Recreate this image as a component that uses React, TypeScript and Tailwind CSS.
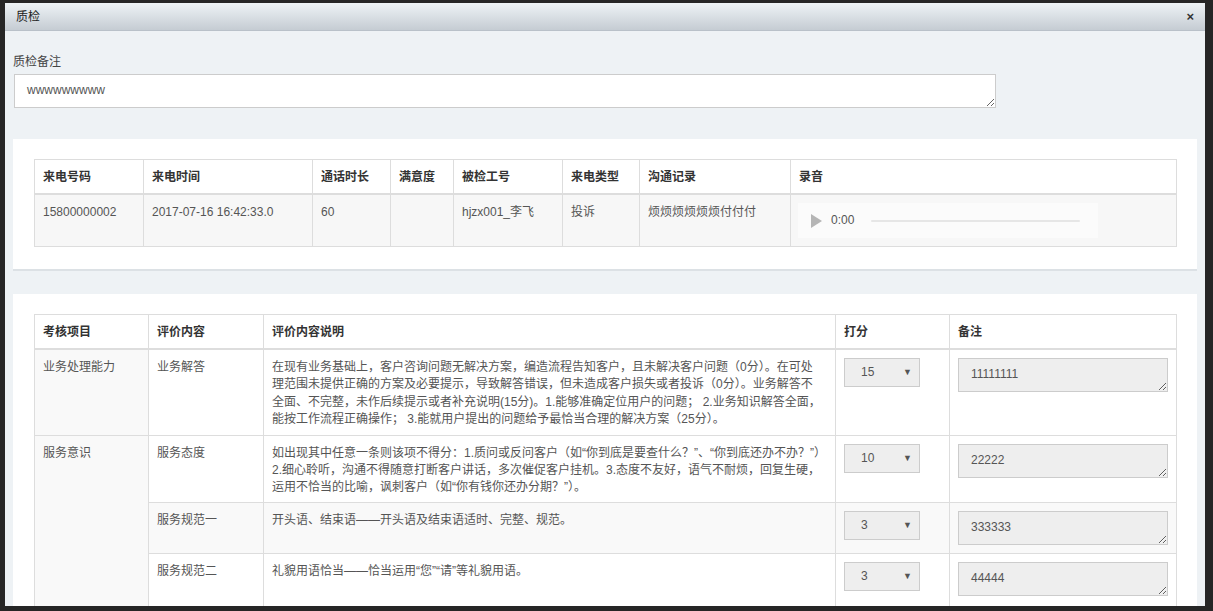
import React from "react";

const FONT = {
  fontFamily: '"Liberation Sans", Arial, "Noto Sans CJK SC", sans-serif',
};

const CALL_COLS = [
  { label: "来电号码", w: "w-[109px]" },
  { label: "来电时间", w: "w-[169px]" },
  { label: "通话时长", w: "w-[78px]" },
  { label: "满意度", w: "w-[63px]" },
  { label: "被检工号", w: "w-[109px]" },
  { label: "来电类型", w: "w-[77px]" },
  { label: "沟通记录", w: "w-[151px]" },
  { label: "录音", w: "w-[386px]" },
];

const CALL_ROW = [
  "15800000002",
  "2017-07-16 16:42:33.0",
  "60",
  "",
  "hjzx001_李飞",
  "投诉",
  "烦烦烦烦烦烦付付付",
];

const EVAL_COLS = [
  { label: "考核项目", w: "w-[114px]" },
  { label: "评价内容", w: "w-[115px]" },
  { label: "评价内容说明", w: "w-[572px]" },
  { label: "打分", w: "w-[114px]" },
  { label: "备注", w: "w-[227px]" },
];

type EvalRow = {
  group?: { name: string; span: number };
  item: string;
  lines: string[];
  score: string;
  remark: string;
  striped?: boolean;
  tall?: boolean;
};

const EVAL_ROWS: EvalRow[] = [
  {
    group: { name: "业务处理能力", span: 1 },
    item: "业务解答",
    lines: [
      "在现有业务基础上，客户咨询问题无解决方案，编造流程告知客户，且未解决客户问题（0分）。在可处",
      "理范围未提供正确的方案及必要提示，导致解答错误，但未造成客户损失或者投诉（0分）。业务解答不",
      "全面、不完整，未作后续提示或者补充说明(15分)。1.能够准确定位用户的问题； 2.业务知识解答全面，",
      "能按工作流程正确操作； 3.能就用户提出的问题给予最恰当合理的解决方案（25分）。",
    ],
    score: "15",
    remark: "11111111",
    tall: true,
  },
  {
    group: { name: "服务意识", span: 3 },
    item: "服务态度",
    lines: [
      "如出现其中任意一条则该项不得分：1.质问或反问客户（如“你到底是要查什么？”、“你到底还办不办？”）",
      "2.细心聆听，沟通不得随意打断客户讲话，多次催促客户挂机。3.态度不友好，语气不耐烦，回复生硬，",
      "运用不恰当的比喻，讽刺客户（如“你有钱你还办分期？”）。",
    ],
    score: "10",
    remark: "22222",
  },
  {
    item: "服务规范一",
    lines: ["开头语、结束语——开头语及结束语适时、完整、规范。"],
    score: "3",
    remark: "333333",
    striped: true,
  },
  {
    item: "服务规范二",
    lines: ["礼貌用语恰当——恰当运用“您”“请”等礼貌用语。"],
    score: "3",
    remark: "44444",
  },
];

function AudioPlayer() {
  return (
    <div className="flex h-[35px] w-[300px] items-center bg-[#fbfbfb] pl-[13px] pr-[18px]">
      <svg width="11" height="14" viewBox="0 0 11 14">
        <path d="M0 0 L11 7 L0 14 Z" fill="#b5b5b5" />
      </svg>
      <span className="ml-[9px] text-[12px] text-[#555]">0:00</span>
      <div className="ml-[17px] h-[2px] flex-1 rounded bg-[#e6e6e6]" />
    </div>
  );
}

function ScoreSelect({ value }: { value: string }) {
  return (
    <div className="flex h-[29px] w-[76px] items-center justify-between border border-[#ccc] bg-[#eee] pl-[16px] pr-[7px] text-[12px] text-[#555]">
      <span>{value}</span>
      <span className="text-[9px] text-[#555]">▼</span>
    </div>
  );
}

export default function App() {
  return (
    <div
      className="h-[611px] w-full overflow-hidden bg-[#262626] pl-[5px] pt-[3px]"
      style={FONT}
    >
      <div className="h-[603px] w-[1200px] overflow-hidden bg-[#eef2f5]">
        {/* title bar */}
        <div className="flex h-[28px] items-center justify-between border-b border-[#b9c1c9] bg-gradient-to-b from-[#eef3f6] to-[#c5ccd3] pl-[11px] pr-[11px]">
          <span className="text-[12px] text-[#222]">质检</span>
          <span className="text-[13px] font-bold leading-none text-[#333]">×</span>
        </div>

        <div className="px-[8px] pt-[23px]">
          <div className="text-[12px] leading-[17px] text-[#444]">质检备注</div>
          <textarea
            readOnly
            defaultValue="wwwwwwwww"
            className="mt-[3px] ml-[1px] block h-[34px] w-[982px] border border-[#ccc] bg-white px-[12px] py-[7px] text-[12px] leading-[17px] text-[#555] outline-none"
          />

          {/* call info card */}
          <div className="mt-[31px] border-b-2 border-[#dce1e5] bg-white px-[21px] pb-[22px] pt-[20px]">
            <table className="w-[1142px] table-fixed border-collapse text-[12px] leading-[17px]">
              <thead>
                <tr>
                  {CALL_COLS.map((c) => (
                    <th
                      key={c.label}
                      className={`${c.w} border border-b-2 border-[#ddd] px-[8px] pb-[7px] pt-[9px] text-left font-bold text-[#333]`}
                    >
                      {c.label}
                    </th>
                  ))}
                </tr>
              </thead>
              <tbody>
                <tr className="bg-[#f7f7f7] align-top">
                  {CALL_ROW.map((v, i) => (
                    <td key={i} className="border border-[#ddd] px-[8px] pb-[7px] pt-[9px] text-[#555]">
                      {v}
                    </td>
                  ))}
                  <td className="border border-[#ddd] px-[7px] py-[8px]">
                    <AudioPlayer />
                  </td>
                </tr>
              </tbody>
            </table>
          </div>

          {/* evaluation card */}
          <div className="mt-[23px] bg-white px-[21px] pb-[22px] pt-[20px]">
            <table className="w-[1142px] table-fixed border-collapse text-[12px] leading-[17px]">
              <thead>
                <tr>
                  {EVAL_COLS.map((c) => (
                    <th
                      key={c.label}
                      className={`${c.w} border border-b-2 border-[#ddd] px-[8px] pb-[7px] pt-[9px] text-left font-bold text-[#333]`}
                    >
                      {c.label}
                    </th>
                  ))}
                </tr>
              </thead>
              <tbody>
                {EVAL_ROWS.map((r, idx) => {
                  const last = idx === EVAL_ROWS.length - 1;
                  const cell = `border border-[#ddd] px-[8px] ${last ? "border-b-0 pb-[14px]" : ""}`;
                  return (
                    <tr
                      key={r.item}
                      className={`align-top ${r.striped ? "bg-[#f9f9f9]" : "bg-white"} ${r.tall ? "leading-[17.3px]" : "leading-[16.7px]"}`}
                    >
                      {r.group && (
                        <td
                          rowSpan={r.group.span}
                          className="border border-b-0 border-[#ddd] bg-[#f9f9f9] px-[8px] pb-[7px] pt-[9px] text-[#555]"
                        >
                          {r.group.name}
                        </td>
                      )}
                      <td className={`${cell} pb-[7px] pt-[9px] text-[#555]`}>{r.item}</td>
                      <td className={`${cell} pb-[7px] pt-[9px] text-[#555]`}>
                        {r.lines.map((l) => (
                          <div key={l} className="whitespace-nowrap">
                            {l}
                          </div>
                        ))}
                      </td>
                      <td className={`${cell} py-[8px]`}>
                        <ScoreSelect value={r.score} />
                      </td>
                      <td className={`${cell} py-[8px]`}>
                        <textarea
                          readOnly
                          defaultValue={r.remark}
                          className="block h-[34px] w-[210px] border border-[#ccc] bg-[#eee] px-[12px] py-[7px] text-[12px] leading-[17px] text-[#555] outline-none"
                        />
                      </td>
                    </tr>
                  );
                })}
              </tbody>
            </table>
          </div>
        </div>
      </div>
    </div>
  );
}
